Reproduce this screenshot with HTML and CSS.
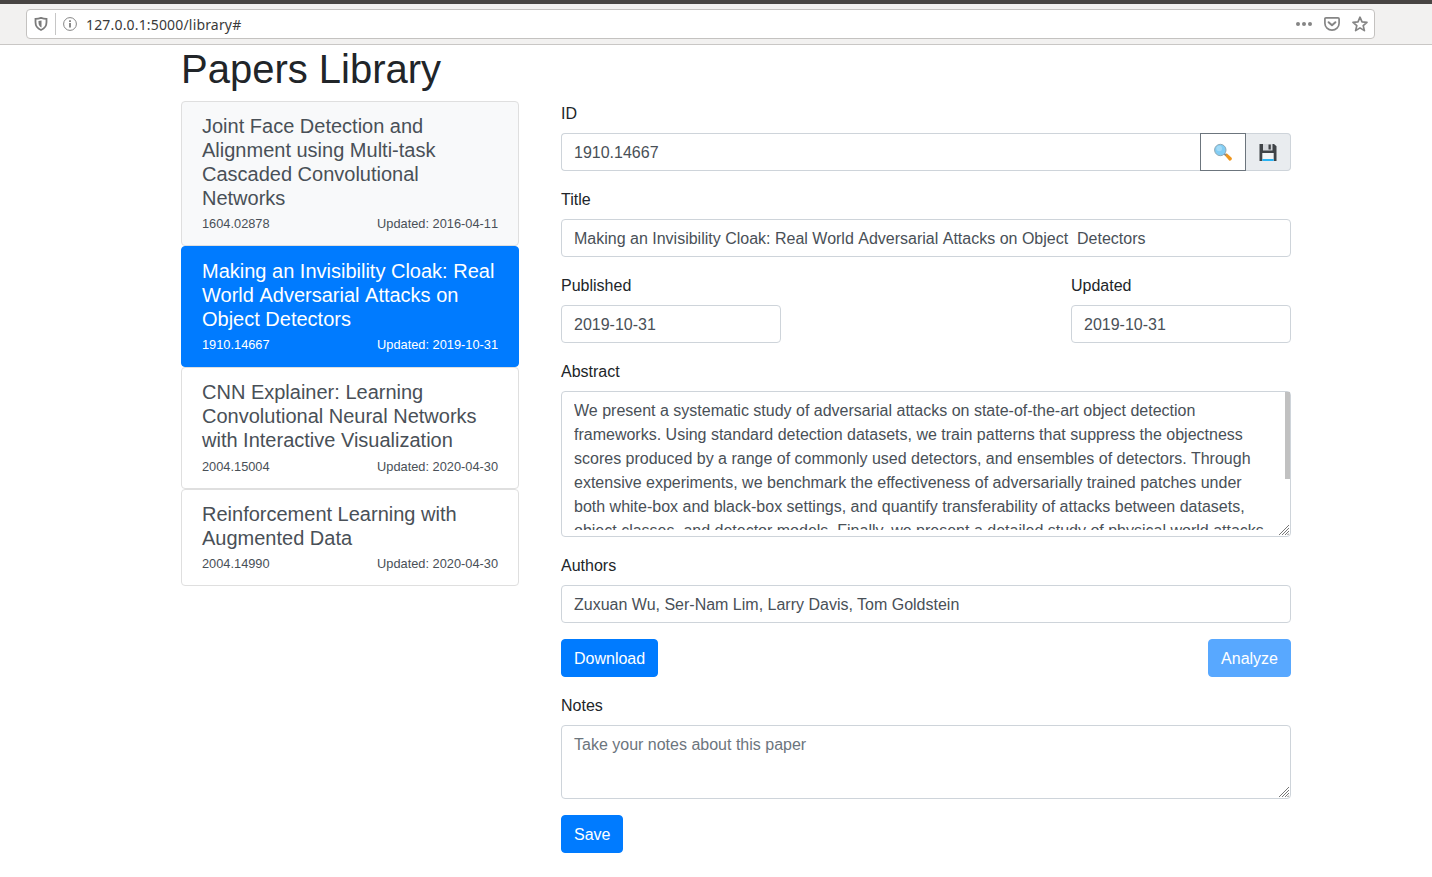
FILE: index.html
```html
<!DOCTYPE html>
<html lang="en">
<head>
<meta charset="utf-8">
<title>Papers Library</title>
<link rel="stylesheet" href="styles.css">
</head>
<body>
<header class="chrome">
  <div class="urlbar">
    <svg class="shield" width="14" height="16" viewBox="0 0 14 16"><path d="M7 1.900C5.200 2.500 3.400 2.800 1.500 2.800V6.200c0 3.700 2 6.300 5.500 7.800 3.500-1.500 5.500-4.100 5.500-7.800V2.800C10.600 2.800 8.800 2.500 7 1.900z" fill="none" stroke="#7b7b7b" stroke-width="1.800"/><path d="M7.500 4.500v7C5.500 10.500 4.500 8.700 4.500 6.400V5.100C5.600 5 6.500 4.800 7.500 4.500z" fill="#7b7b7b"/></svg>
    <span class="divider"></span>
    <svg class="info" width="14" height="14" viewBox="0 0 14 14"><circle cx="7" cy="7" r="6.400" fill="none" stroke="#858585" stroke-width="1"/><path d="M7 6v4.500M7 3.200v1.700" stroke="#777" stroke-width="1.700"/></svg>
    <span class="address">127.0.0.1:5000/library#</span>
    <div class="actions">
      <svg width="16" height="16" viewBox="0 0 16 16" fill="#858585"><circle cx="2" cy="8" r="2"/><circle cx="8" cy="8" r="2"/><circle cx="14" cy="8" r="2"/></svg>
      <svg width="16" height="16" viewBox="0 0 16 16" fill="none" stroke="#858585" stroke-width="1.700" stroke-linecap="round" stroke-linejoin="round"><path d="M2 1.900h12c.7 0 1.100.4 1.100 1.100v4.200c0 3.900-3.200 6.900-7.100 6.900S.9 11.100.9 7.200V3c0-.7.4-1.100 1.100-1.100z"/><path d="M4.600 6.200 8 9.300l3.400-3.100" stroke-width="2"/></svg>
      <svg width="16" height="16" viewBox="0 0 16 16" fill="none" stroke="#858585" stroke-width="1.700" stroke-linejoin="round"><path d="M8 1.200 10 5.900l5 .4-3.800 3.300 1.200 5L8 11.900l-4.400 2.700 1.200-5L1 6.300l5-.4z"/></svg>
    </div>
  </div>
</header>
<main class="container">
  <h1>Papers Library</h1>
  <div class="row">
    <nav class="papers">
      <a class="paper hovered"><h5>Joint Face Detection and Alignment using Multi-task Cascaded Convolutional Networks</h5><div class="meta"><span>1604.02878</span><span class="unkerned">Updated: 2016-04-11</span></div></a>
      <a class="paper active"><h5>Making an Invisibility Cloak: Real World<span class="unkerned"> </span>Adversarial<span class="unkerned"> </span>Attacks on Object Detectors</h5><div class="meta"><span>1910.14667</span><span>Updated: 2019-10-31</span></div></a>
      <a class="paper"><h5>CNN Explainer: Learning Convolutional Neural Networks with Interactive Visualization</h5><div class="meta"><span>2004.15004</span><span>Updated: 2020-04-30</span></div></a>
      <a class="paper"><h5>Reinforcement Learning with Augmented Data</h5><div class="meta"><span>2004.14990</span><span>Updated: 2020-04-30</span></div></a>
    </nav>
    <section class="form">
      <div class="group">
        <div class="label">ID</div>
        <div class="input-group">
          <div class="control id">1910.14667</div>
          <div class="addon search"><svg width="20" height="20" viewBox="0 0 20 20"><path d="m11.700 13.200 2-1.900 4.700 4.300c1.400 1.300-.7 4-2.200 2.800z" fill="#ef961d"/><path d="m11 11.500 2 1.900" stroke="#858b8e" stroke-width="1.800"/><circle cx="7.300" cy="8" r="5.700" fill="#82cdf4" stroke="#8fa9b5" stroke-width="1"/><circle cx="6.200" cy="6.500" r="2.800" fill="#a3dbf7"/></svg></div>
          <div class="addon disk"><svg width="18" height="18" viewBox="0 0 18 18"><path d="M.5 1h14.500L17.500 3.200V18H.5z" fill="#3f4347"/><path d="M4 1h9.500v6.500H4z" fill="#d5d8dc"/><path d="M9.500 1.500h2.300v5H9.500z" fill="#3f4347"/><path d="M3.300 10h11.400v8H3.300z" fill="#f3f5f6"/><path d="M3.300 16h11.400v2H3.300z" fill="#29b3f3"/></svg></div>
        </div>
      </div>
      <div class="group"><div class="label">Title</div><div class="control">Making an Invisibility Cloak: Real World<span class="unkerned"> </span>Adversarial<span class="unkerned"> </span>Attacks on Object  Detectors</div></div>
      <div class="dates">
        <div class="group date"><div class="label">Published</div><div class="control">2019-10-31</div></div>
        <div class="group date"><div class="label">Updated</div><div class="control">2019-10-31</div></div>
      </div>
      <div class="group">
        <div class="label">Abstract</div>
        <div class="control area abstract"><div class="scroll">We present a systematic study of adversarial attacks on state-of-the-art object detection
frameworks. Using standard detection datasets, we train patterns that suppress the objectness
scores produced by a range of commonly used detectors, and ensembles of detectors. Through
extensive experiments, we benchmark the effectiveness of adversarially trained patches under
both white-box and black-box settings, and quantify transferability of attacks between datasets,
object classes, and detector models. Finally, we present a detailed study of physical world attacks</div>
          <span class="thumb"></span>
          <svg class="grip" width="10" height="10" viewBox="0 0 10 10"><path d="M0 10 10 0M3 10l7-7M6 10l4-4M8.500 10 10 8.500" stroke="#777" stroke-width="1"/></svg>
        </div>
      </div>
      <div class="group"><div class="label">Authors</div><div class="control">Zuxuan Wu, Ser-Nam Lim, Larry Davis, Tom Goldstein</div></div>
      <div class="buttons"><button class="btn">Download</button><button class="btn disabled">Analyze</button></div>
      <div class="group">
        <div class="label">Notes</div>
        <div class="control area notes"><span class="placeholder">Take your notes about this paper</span>
          <svg class="grip" width="10" height="10" viewBox="0 0 10 10"><path d="M0 10 10 0M3 10l7-7M6 10l4-4M8.500 10 10 8.500" stroke="#777" stroke-width="1"/></svg>
        </div>
      </div>
      <button class="btn">Save</button>
    </section>
  </div>
</main>
</body>
</html>
```
FILE: styles.css
```css
* { box-sizing: border-box; }
body {
  margin: 0;
  height: 877px;
  overflow: hidden;
  background: #fff;
  color: #212529;
  font: 16px/24px "Liberation Sans", Arial, sans-serif;
}
svg { display: block; flex: none; }

.chrome {
  height: 45px;
  padding: 5px 57px 0 26px;
  background: #f2f1f0;
  border-top: 4px solid #484543;
  border-bottom: 1px solid #c9c7c5;
}
.urlbar {
  display: flex;
  align-items: center;
  height: 30px;
  padding: 0 6px 0 7px;
  background: #fff;
  border: 1px solid #c4c2c0;
  border-radius: 4px;
}
.divider { width: 1px; height: 22px; margin: 0 7px; background: #c6c6c6; }
.address {
  margin-left: 9px;
  padding-top: 2px;
  color: #3a3a3a;
  font: 14px/20px "Noto Sans", "Open Sans", sans-serif;
  letter-spacing: .17px;
}
.actions { display: flex; gap: 12px; margin-left: auto; }

.container { width: 1110px; margin-left: 181px; }
h1 { margin: 0 0 8px; font-size: 40px; font-weight: 400; line-height: 48px; }
.row { display: flex; align-items: flex-start; gap: 42px; }
.unkerned { font-kerning: none; }

.papers { width: 338px; flex: none; }
.paper {
  display: block;
  padding: 12px 20px;
  border: 1px solid #dfdfdf;
  border-radius: 4px;
  color: #495057;
}
.paper.hovered { background: #f8f9fa; }
.paper.active { background: #007bff; border-color: #007bff; color: #fff; }
h5 { margin: 0 0 4px; font-size: 20px; font-weight: 400; line-height: 24px; }
.meta {
  display: flex;
  justify-content: space-between;
  font-size: 12.8px;
  line-height: 19.2px;
}
.paper:nth-child(3) .meta { padding-top: .2px; margin-bottom: -.2px; }

.form { flex: 1; min-width: 0; }
.group { margin-bottom: 16px; }
.label { padding-top: 1px; margin-bottom: 7px; }
.control {
  position: relative;
  height: 38px;
  padding: 7px 12px 5px;
  border: 1px solid #ced4da;
  border-radius: 4px;
  background: #fff;
  color: #495057;
  white-space: pre;
}
.input-group { display: flex; }
.id { flex: 1; border-right: 0; border-radius: 4px 0 0 4px; }
.addon {
  display: flex;
  align-items: center;
  justify-content: center;
  height: 38px;
  border: 1px solid #6c757d;
}
.search { width: 46px; }
.disk {
  width: 45px;
  border-color: #ced4da;
  border-left: 0;
  border-radius: 0 4px 4px 0;
  background: #e9ecef;
}
.dates { display: flex; justify-content: space-between; }
.date { width: 220px; }
.abstract { height: 146px; }
.scroll { height: 131px; overflow: hidden; }
.notes { height: 74px; white-space: normal; }
.placeholder { color: #6c757d; }
.thumb {
  position: absolute;
  top: 0;
  right: 0;
  width: 5px;
  height: 87px;
  background: #c1c1c1;
}
.grip { position: absolute; right: 1px; bottom: 1px; }

.buttons { display: flex; justify-content: space-between; margin-bottom: 16px; }
.btn {
  display: block;
  height: 38px;
  padding: 7px 12px 5px;
  border: 1px solid #007bff;
  border-radius: 4px;
  background: #007bff;
  color: #fff;
  font: inherit;
}
.disabled { opacity: .65; }
```
